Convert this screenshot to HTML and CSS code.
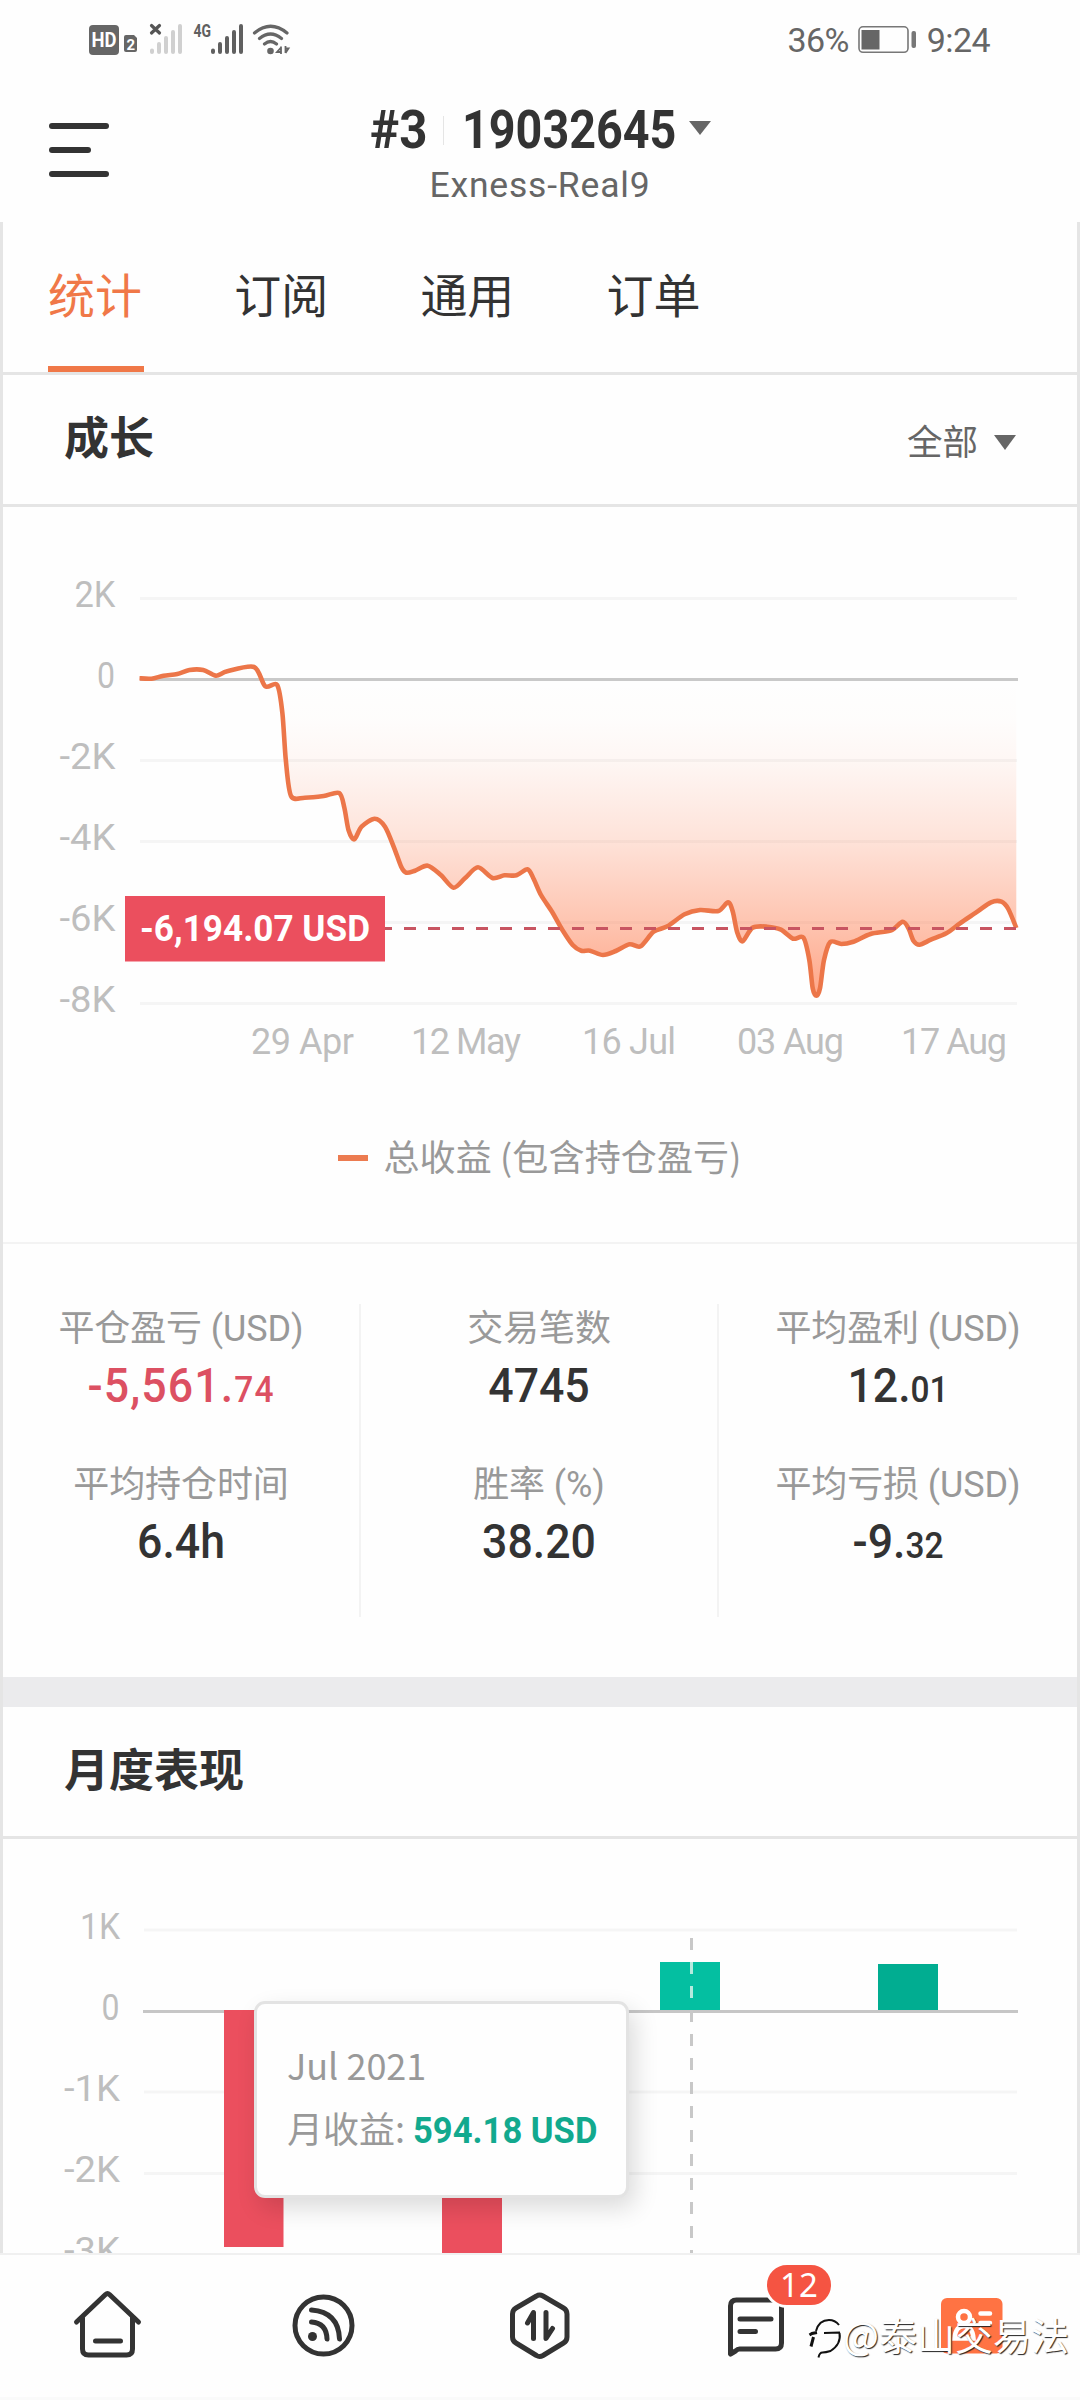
FILE: index.html
```html
<!DOCTYPE html>
<html lang="zh-CN">
<head>
<meta charset="utf-8">
<title>19032645</title>
<link rel="stylesheet" href="styles.css">
</head>
<body>
<div class="status">
  <svg class="status-icons" width="204" height="42" viewBox="88 14 204 42">
    <rect x="89" y="25" width="30" height="30" rx="4" fill="#666"/>
    <text x="91.5" y="46.500" class="st-hd" textLength="25" lengthAdjust="spacingAndGlyphs">HD</text>
    <path d="M124 37q0-2 2-2h8l3 3v12q0 2-2 2h-9q-2 0-2-2z" fill="#666"/>
    <text x="126.500" y="50" class="st-sim">2</text>
    <path d="M151.500 25.500l8 7.500M159.500 25.500l-8 7.500" stroke="#555" stroke-width="3.200" stroke-linecap="round"/>
    <g stroke="#d0d0d0" stroke-width="4" stroke-linecap="round"><path d="M152 50.500v1.500M159 44v8M166 38v14M173 32v20M180 26v26"/></g>
    <text x="193.500" y="37" class="st-4g" textLength="17.500" lengthAdjust="spacingAndGlyphs">4G</text>
    <g stroke="#606060" stroke-width="4" stroke-linecap="round"><path d="M213 50.500v1.500M220 44v8M227 38v14M234 32v20M241 26v26"/></g>
    <g fill="none" stroke="#666" stroke-width="3.200" stroke-linecap="round"><path d="M254.500 33q16-13.500 32.500 0M259.500 38.500q11-9 22 0M264.500 44q6-5 12 0"/></g>
    <circle cx="270.500" cy="51" r="3.300" fill="#666"/>
    <path d="M281 46.500v7.500M281 47.500l-4 4.500h4M285.500 46v7M285.500 53l3-4.500h-3" stroke="#666" stroke-width="1.800" fill="none"/>
  </svg>
  <div class="status-right">
    <span class="st-num st-pct">36%</span>
    <svg width="60" height="28" viewBox="858 26 60 28">
      <rect x="860" y="26.800" width="49" height="25.500" rx="4" fill="none" stroke="#777" stroke-width="1.600"/>
      <rect x="862.500" y="30" width="18" height="19.500" fill="#666"/>
      <rect x="912.500" y="31" width="4.500" height="17" rx="2" fill="#777"/>
    </svg>
    <span class="st-num">9:24</span>
  </div>
</div>
<header class="top">
  <div class="menu"><i></i><i class="short"></i><i></i></div>
  <div class="account">
    <div class="acc-line"><b class="acc-rank">#3</b><i class="acc-sep"></i><b class="acc-id">19032645</b><i class="caret"></i></div>
    <div class="server">Exness-Real9</div>
  </div>
</header>
<main class="content">
  <nav class="tabs"><a class="on">统计</a><a>订阅</a><a>通用</a><a>订单</a></nav>
  <div class="sec-head"><h2>成长</h2><span class="filter">全部<i class="caret caret-down"></i></span></div>
  <svg class="chart" width="1074" height="593" viewBox="3 507 1074 593">
    <defs>
      <linearGradient id="loss" gradientUnits="userSpaceOnUse" x1="0" y1="680" x2="0" y2="1000">
        <stop offset="0" stop-color="#ff6e3c" stop-opacity="0"/>
        <stop offset=".12" stop-color="#ff6e3c" stop-opacity=".01"/>
        <stop offset=".25" stop-color="#ff6e3c" stop-opacity=".05"/>
        <stop offset=".5" stop-color="#ff6e3c" stop-opacity=".19"/>
        <stop offset=".76" stop-color="#ff6e3c" stop-opacity=".4"/>
        <stop offset="1" stop-color="#ff6e3c" stop-opacity=".62"/>
      </linearGradient>
    </defs>
    <g class="grid"><path d="M140 598.500H1017M140 760.500H1017M140 841.500H1017M140 922.500H1017M140 1003.500H1017"/></g>
    <g class="axis">
      <text x="74.500" y="606.500" textLength="41" lengthAdjust="spacingAndGlyphs">2K</text>
      <text x="97" y="687.500" textLength="18" lengthAdjust="spacingAndGlyphs">0</text>
      <text x="59.500" y="768.500" textLength="56" lengthAdjust="spacingAndGlyphs">-2K</text>
      <text x="59.500" y="849.500" textLength="56" lengthAdjust="spacingAndGlyphs">-4K</text>
      <text x="59.500" y="930.500" textLength="56" lengthAdjust="spacingAndGlyphs">-6K</text>
      <text x="59.500" y="1011.500" textLength="56" lengthAdjust="spacingAndGlyphs">-8K</text>
      <text x="251" y="1054" textLength="103">29 Apr</text>
      <text x="411" y="1054" textLength="110">12 May</text>
      <text x="582" y="1054" textLength="94">16 Jul</text>
      <text x="737" y="1054" textLength="107">03 Aug</text>
      <text x="901" y="1054" textLength="106">17 Aug</text>
    </g>
    <path id="area" fill="url(#loss)"/>
    <path d="M140 679.500H1018" stroke="#c9c9c9" stroke-width="3"/>
    <path id="curve" class="curve"/>
    <path d="M380 928.500H1017" stroke="#c85561" stroke-width="3" stroke-dasharray="12 12"/>
    <rect x="125" y="896" width="260" height="65.500" fill="#eb4f5e"/>
    <text x="140" y="941" class="tag" textLength="230" lengthAdjust="spacingAndGlyphs">-6,194.07 USD</text>
  </svg>
  <div class="legend"><i></i><span>总收益 (包含持仓盈亏)</span></div>
  <div class="stats">
    <div class="col">
      <div class="lab">平仓盈亏 (USD)</div><div class="val neg">-5,561.<small>74</small></div>
      <div class="lab">平均持仓时间</div><div class="val">6.4h</div>
    </div>
    <div class="col">
      <div class="lab">交易笔数</div><div class="val">4745</div>
      <div class="lab">胜率 (%)</div><div class="val">38.20</div>
    </div>
    <div class="col">
      <div class="lab">平均盈利 (USD)</div><div class="val">12.<small>01</small></div>
      <div class="lab">平均亏损 (USD)</div><div class="val">-9.<small>32</small></div>
    </div>
  </div>
  <div class="band"></div>
  <div class="sec-head"><h2>月度表现</h2></div>
  <div class="monthly">
    <svg class="chart" width="1074" height="414" viewBox="3 1839 1074 414">
      <g class="grid"><path d="M144 1930H1017M144 2092H1017M144 2173.500H1017"/></g>
      <g class="axis">
        <text x="80" y="1938.500" textLength="40" lengthAdjust="spacingAndGlyphs">1K</text>
        <text x="101.500" y="2019.500" textLength="18" lengthAdjust="spacingAndGlyphs">0</text>
        <text x="64" y="2100.500" textLength="56" lengthAdjust="spacingAndGlyphs">-1K</text>
        <text x="64" y="2181.500" textLength="56" lengthAdjust="spacingAndGlyphs">-2K</text>
        <text x="64" y="2262.500" textLength="56" lengthAdjust="spacingAndGlyphs">-3K</text>
      </g>
      <path d="M224 2010h59.500v237H224zM442 2010h60v244h-60z" fill="#eb4f5e"/>
      <path d="M143 2011.500H1018" stroke="#c6c6c6" stroke-width="3"/>
      <path d="M224 2010h59.500v3H224z" fill="#eb4f5e"/>
      <rect x="660" y="1962" width="60" height="48" fill="#04bfa1"/>
      <rect x="878" y="1964" width="60" height="46" fill="#01ad91"/>
      <path d="M691.500 1938V2254" stroke="#c8c8c8" stroke-width="3" stroke-dasharray="12 12"/>
      <path d="M691.500 1962v12M691.500 1986v12" stroke="#b5eade" stroke-width="3"/>
    </svg>
    <div class="tip">
      <div>Jul 2021</div>
      <div>月收益: <b>594.18 USD</b></div>
    </div>
  </div>
</main>
<footer class="nav">
  <div class="item"><svg width="216" height="142" viewBox="0 2255 216 142">
    <g class="ico"><path d="M76.500 2322L105.500 2294.500q2-1.800 4 0L138.500 2322M82.500 2318v31q0 6 6 6h38q6 0 6-6v-31M95.500 2341h25"/></g></svg></div>
  <div class="item"><svg width="216" height="142" viewBox="216 2255 216 142">
    <g class="ico"><circle cx="323.500" cy="2325.500" r="28.500"/><path d="M311.500 2322q15 1 15.500 17M311.500 2310q27 2 28 29"/></g><circle cx="312.500" cy="2336.500" r="4.500" fill="#333"/></svg></div>
  <div class="item"><svg width="216" height="142" viewBox="432 2255 216 142">
    <g class="ico"><path d="M536.500 2296q3-2 6.500 0L563.500 2308q3.500 2 3.500 6v23q0 4-3.500 6L543 2355.500q-3.500 2-6.500 0L516 2343q-3.500-2-3.500-6v-23q0-4 3.500-6zM527.500 2323l6-10.500v26M546 2312.500v26l6.500-10"/></g></svg></div>
  <div class="item"><svg width="216" height="142" viewBox="648 2255 216 142">
    <g class="ico"><path d="M730.500 2354V2306q0-6 6-6h39q6 0 6 6v37q0 6-6 6h-36q-2 0-4 2zM740 2319h31M740 2331.500h15.500"/></g></svg><span class="badge">12</span></div>
  <div class="item"><svg width="216" height="142" viewBox="864 2255 216 142">
    <rect x="941" y="2298" width="61.500" height="55.500" rx="6" fill="#ff7343"/>
    <g fill="none" stroke="#fff" stroke-width="4.500" stroke-linecap="round"><circle cx="964" cy="2317" r="6"/><path d="M954.500 2338.500q1-12.500 9.500-12.500t9.500 12.500zM980.500 2313.500h9.500M980.500 2323h9.500"/></g></svg></div>
  <div class="mark">
    <svg width="36" height="44" viewBox="808 2320 36 44"><g fill="none" stroke="#111" stroke-width="2"><path d="M809.500 2339l2.500-1.500 5-1M813.500 2341l-2.500 9.500" stroke-width="3"/><path d="M816 2335q3-11 13-11 6 0 10 5M824 2337l16-.5M839.500 2337q2 11-9 18-5 1.500-8 1.500t-4 5"/></g></svg><span>@泰山交易法</span>
  </div>
</footer>
<script src="chart.js"></script>
</body>
</html>
```
FILE: styles.css
```css
* { box-sizing: border-box; }
html, body { margin: 0; }
body { width: 1080px; height: 2400px; overflow: hidden; background: #fefefe; color: #333; font-family: Roboto, "Noto Sans CJK SC", sans-serif; display: flex; flex-direction: column; }
i { display: block; font-style: normal; }
svg { display: block; }
text { white-space: pre; }

.status { height: 80px; padding: 14px 90px 0 88px; display: flex; justify-content: space-between; align-items: flex-start; }
.status-right { display: flex; align-items: center; height: 52px; color: #666; }
.st-num { font-size: 34px; line-height: 36px; letter-spacing: -.6px; }
.st-pct { margin-right: 8px; }
.status-right svg { margin: -1px 10px 0 0; }
.st-hd { font: 700 20px Roboto, sans-serif; fill: #fff; }
.st-sim { font: 700 15px Roboto, sans-serif; fill: #fff; }
.st-4g { font: 700 18px Roboto, sans-serif; fill: #606060; }

.top { height: 142px; display: grid; grid-template-columns: 160px 1fr 160px; }
.menu { padding: 43px 0 0 49px; display: flex; flex-direction: column; gap: 18px; }
.menu i { width: 60px; height: 6px; border-radius: 3px; background: #333; }
.menu .short { width: 42px; }
.account { display: flex; flex-direction: column; align-items: center; padding-top: 20px; }
.acc-line { display: flex; align-items: center; height: 60px; width: 341px; font-size: 53.500px; line-height: 60px; }
.acc-rank { width: 58px; transform: scaleX(.92); transform-origin: left; }
.acc-id { width: 212px; transform: scaleX(.873); transform-origin: left; }
.acc-sep { width: 2px; height: 29px; background: #e5e5e5; margin: 0 18px 0 15px; }
.caret { flex: none; width: 0; height: 0; border: solid transparent; border-width: 14px 11.500px 0; border-top-color: #666; margin: -4px 0 0 15px; }
.server { font-size: 35.500px; font-weight: 450; line-height: 50px; color: #666; letter-spacing: .8px; }

.content { height: 2031px; overflow: hidden; border: solid #e5e5e5; border-width: 0 3px; }
.tabs { height: 153px; border-bottom: 3px solid #e5e5e5; padding: 0 45px; display: flex; gap: 90.200px; }
.tabs a { width: 96px; height: 150px; font: 47px/142px "Noto Sans CJK SC", sans-serif; }
.tabs .on { color: #f07848; border-bottom: 6px solid #f07848; }
.sec-head { height: 132px; border-bottom: 3px solid #e5e5e5; padding: 0 61px; display: flex; justify-content: space-between; align-items: center; }
.sec-head h2 { margin: -9px 0 0; font: 700 45px/129px "Noto Sans CJK SC", sans-serif; }
.filter { display: flex; align-items: center; font-size: 35.500px; color: #666; }
.caret-down { border-width: 15px 11.500px 0; margin: 5px 0 0 16px; }

.grid path { stroke: #f5f5f5; stroke-width: 3; }
.axis text { font: 400 36px Roboto, sans-serif; fill: #bebebe; }
.curve { fill: none; stroke: #ec7649; stroke-width: 4.600; stroke-linejoin: round; stroke-linecap: butt; }
.tag { font: 700 36px Roboto, sans-serif; fill: #fff; }
.legend { height: 144px; border-bottom: 2px solid #f3f3f3; display: flex; justify-content: center; align-items: flex-start; padding-top: 29px; font: 36px/52px "Noto Sans CJK SC", sans-serif; color: #999; letter-spacing: .15px; }
.legend i { width: 30px; height: 6px; background: #ec7b50; margin: 26px 15px 0 0; }

.stats { height: 433px; padding: 60px 0; display: grid; grid-template-columns: 356px 358px 360px; }
.col { text-align: center; }
.col + .col { border-left: 2px solid #f3f3f3; }
.lab { font-size: 36px; line-height: 50px; height: 53px; color: #999; letter-spacing: -.1px; }
.val { font-size: 48px; font-weight: 500; line-height: 57px; height: 103px; transform: scaleX(.93); }
.val small { font-size: 36px; }
.neg { color: #dc5062; letter-spacing: 1.200px; }
.band { height: 30px; background: #ebebed; }

.monthly { position: relative; height: 414px; }
.tip { position: absolute; left: 251px; top: 162px; width: 375px; height: 197px; background: #fefefe; border: 3px solid #e3e3e3; border-radius: 11px; box-shadow: 6px 10px 24px rgba(0,0,0,.14); padding: 29px 0 0 30px; font: 36px/63px "Noto Sans CJK SC", sans-serif; color: #999; white-space: nowrap; }
.tip b { display: inline-block; font: 700 37.500px/50px Roboto, sans-serif; color: #12a98e; transform: scaleX(.922); transform-origin: left; }

.nav { position: relative; height: 147px; border-top: 2px solid #f0f0f0; border-bottom: 3px solid #fafafa; display: flex; }
.item { position: relative; width: 216px; }
.ico { fill: none; stroke: #333; stroke-width: 5; stroke-linecap: round; stroke-linejoin: round; }
.badge { position: absolute; left: 116px; top: 7px; width: 70px; height: 46px; border: 3px solid #fefefe; border-radius: 23px; background: #f55442; color: #fff; text-align: center; font: 33px/39px "Noto Sans", sans-serif; }
.mark { position: absolute; left: 808px; top: 61px; display: flex; align-items: center; font: 38px/50px "Noto Sans CJK SC", sans-serif; color: #fff; text-shadow: 1px 1px 1px #222; white-space: nowrap; }
.mark span { margin: -8px 0 0 -1px; }
```
FILE: chart.js
```js
// Total profit samples, in chart coordinates.
const pts = [
  [139.5,678.3],[151.5,678.7],[163.6,675.7],[177.3,674],[189.4,670],[203.2,670],[215.9,675.7],[227.3,671.3],
  [254.1,667],[265.2,686.3],[277.2,685],[282.4,713.3],[285.8,760],[291,796],[304.8,797.7],[323.7,796],[339.2,793],
  [344.4,808],[348.5,830],[354.3,839.3],[361.6,826.7],[374.7,818.7],[385,826.7],[394.3,848.3],[401.2,866.7],
  [406.3,872.7],[415,870.7],[427.7,865.7],[440.8,875],[453.5,887.7],[464.9,878.3],[478,867.3],[492.4,878],
  [504.5,875.3],[516.5,875.3],[527.5,869.3],[533.7,879],[541,895],[552,911.7],[562.4,930],[572.7,945],
  [581.3,950.7],[590,950.7],[603,955],[615.8,951],[629.5,944.3],[640.6,946.3],[653.6,931.7],[667.4,926.3],
  [684.6,914.3],[700,910],[718.4,911],[728,902.3],[732.8,911.7],[737,931.7],[742.5,941.3],[752.5,927.7],
  [767.3,926.7],[781,929.7],[793,938.7],[803.4,937.7],[809.3,960],[812.7,988.3],[816.5,995.7],[820,988.3],
  [824,960],[830.3,942],[841.3,944],[853.4,941.7],[870.6,934],[891.2,930.3],[902.6,921.7],[908.5,928.3],
  [913.6,941],[919.5,944.7],[930.9,939.7],[946.3,933.3],[960,923.3],[977.3,911.7],[991,902.3],[1001.4,901.7],
  [1008.3,909],[1016.3,928]
];
const k = 1 / 7;
let d = "M" + pts[0];
for (let i = 0; i < pts.length - 1; i++) {
  const a = pts[i - 1] || pts[i], b = pts[i], c = pts[i + 1], e = pts[i + 2] || c;
  d += "C" + [b[0] + (c[0] - a[0]) * k, b[1] + (c[1] - a[1]) * k,
              c[0] - (e[0] - b[0]) * k, c[1] - (e[1] - b[1]) * k, c[0], c[1]].map(v => v.toFixed(1));
}
document.getElementById("curve").setAttribute("d", d);
document.getElementById("area").setAttribute("d", d + "V679.5H139.5Z");
```
